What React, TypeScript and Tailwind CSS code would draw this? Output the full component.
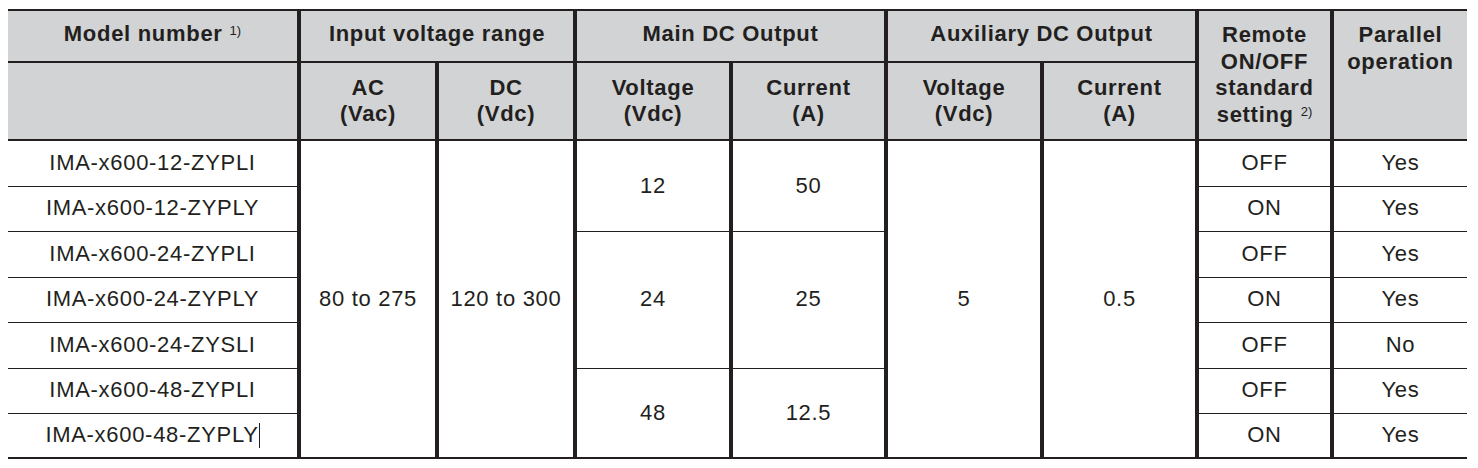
import type { ReactNode } from "react";

const line = "border-[#231f20]";
const head = `bg-[#d1d3d4] font-bold text-center ${line}`;
const cell = `text-center align-middle ${line}`;

interface Row {
  model: string;
  remote: string;
  parallel: string;
}

const rows: Row[] = [
  { model: "IMA-x600-12-ZYPLI", remote: "OFF", parallel: "Yes" },
  { model: "IMA-x600-12-ZYPLY", remote: "ON", parallel: "Yes" },
  { model: "IMA-x600-24-ZYPLI", remote: "OFF", parallel: "Yes" },
  { model: "IMA-x600-24-ZYPLY", remote: "ON", parallel: "Yes" },
  { model: "IMA-x600-24-ZYSLI", remote: "OFF", parallel: "No" },
  { model: "IMA-x600-48-ZYPLI", remote: "OFF", parallel: "Yes" },
  { model: "IMA-x600-48-ZYPLY", remote: "ON", parallel: "Yes" },
];

const heights = ["h-[46px]", "h-[45px]", "h-[46px]", "h-[45px]", "h-[46px]", "h-[45px]", "h-[45px]"];

// main dc output groups: [voltage, current, rowspan]
const mainGroups: Record<number, [string, string, number]> = {
  0: ["12", "50", 2],
  2: ["24", "25", 3],
  5: ["48", "12.5", 2],
};

function Note({ children }: { children: ReactNode }) {
  return (
    <span className="relative -top-[6px] ml-[7px] text-[13px] font-normal tracking-normal">
      {children}
    </span>
  );
}

export default function App() {
  return (
    <div className="min-h-screen bg-white pl-[8px] pt-[9px] font-['Liberation_Sans',Arial,sans-serif] text-[#231f20]">
      <table className="w-[1459px] table-fixed border-collapse text-[22px] leading-[26.5px]">
        <colgroup>
          <col className="w-[291px]" />
          <col className="w-[138px]" />
          <col className="w-[138px]" />
          <col className="w-[156px]" />
          <col className="w-[155px]" />
          <col className="w-[156px]" />
          <col className="w-[155px]" />
          <col className="w-[135px]" />
          <col className="w-[135px]" />
        </colgroup>
        <thead className="tracking-[0.7px]">
          <tr className="h-[52px]">
            <th className={`${head} border-t-2 border-b-2 align-top pt-[10px]`}>
              Model number<Note>1)</Note>
            </th>
            <th colSpan={2} className={`${head} border-t-2 border-b-2 border-l-4 align-top pt-[10px]`}>
              Input voltage range
            </th>
            <th colSpan={2} className={`${head} border-t-2 border-b-2 border-l-4 align-top pt-[10px]`}>
              Main DC Output
            </th>
            <th colSpan={2} className={`${head} border-t-2 border-b-2 border-l-4 align-top pt-[10px]`}>
              Auxiliary DC Output
            </th>
            <th rowSpan={2} className={`${head} border-t-2 border-b-2 border-l-4 align-top pt-[11px]`}>
              Remote
              <br />
              ON/OFF
              <br />
              standard
              <br />
              setting<Note>2)</Note>
            </th>
            <th rowSpan={2} className={`${head} border-t-2 border-b-2 border-l-4 align-top pt-[11px]`}>
              Parallel
              <br />
              operation
            </th>
          </tr>
          <tr className="h-[78px]">
            <th className={`${head} border-b-2`}></th>
            <th className={`${head} border-b-2 border-l-4 align-middle`}>
              AC
              <br />
              (Vac)
            </th>
            <th className={`${head} border-b-2 border-l-4 align-middle`}>
              DC
              <br />
              (Vdc)
            </th>
            <th className={`${head} border-b-2 border-l-4 align-middle`}>
              Voltage
              <br />
              (Vdc)
            </th>
            <th className={`${head} border-b-2 border-l-4 align-middle`}>
              Current
              <br />
              (A)
            </th>
            <th className={`${head} border-b-2 border-l-4 align-middle`}>
              Voltage
              <br />
              (Vdc)
            </th>
            <th className={`${head} border-b-2 border-l-4 align-middle`}>
              Current
              <br />
              (A)
            </th>
          </tr>
        </thead>
        <tbody className="tracking-[0.7px]">
          {rows.map((r, i) => {
            const last = i === rows.length - 1;
            const bottom = last ? "border-b-2" : "border-b";
            const group = mainGroups[i];
            const groupLast = group && i + group[2] === rows.length;
            return (
              <tr key={r.model} className={heights[i]}>
                <td className={`${cell} ${bottom}`}>
                  {r.model}
                  {last && (
                    <span className="inline-block w-px h-[25px] bg-[#231f20] align-[-6px]" />
                  )}
                </td>
                {i === 0 && (
                  <>
                    <td rowSpan={7} className={`${cell} border-b-2 border-l-4`}>
                      80 to 275
                    </td>
                    <td rowSpan={7} className={`${cell} border-b-2 border-l-4`}>
                      120 to 300
                    </td>
                  </>
                )}
                {group && (
                  <>
                    <td
                      rowSpan={group[2]}
                      className={`${cell} border-l-4 ${groupLast ? "border-b-2" : "border-b"}`}
                    >
                      {group[0]}
                    </td>
                    <td
                      rowSpan={group[2]}
                      className={`${cell} border-l-4 ${groupLast ? "border-b-2" : "border-b"}`}
                    >
                      {group[1]}
                    </td>
                  </>
                )}
                {i === 0 && (
                  <>
                    <td rowSpan={7} className={`${cell} border-b-2 border-l-4`}>
                      5
                    </td>
                    <td rowSpan={7} className={`${cell} border-b-2 border-l-4`}>
                      0.5
                    </td>
                  </>
                )}
                <td className={`${cell} ${bottom} border-l-4`}>{r.remote}</td>
                <td className={`${cell} ${bottom} border-l-4`}>{r.parallel}</td>
              </tr>
            );
          })}
        </tbody>
      </table>
    </div>
  );
}
